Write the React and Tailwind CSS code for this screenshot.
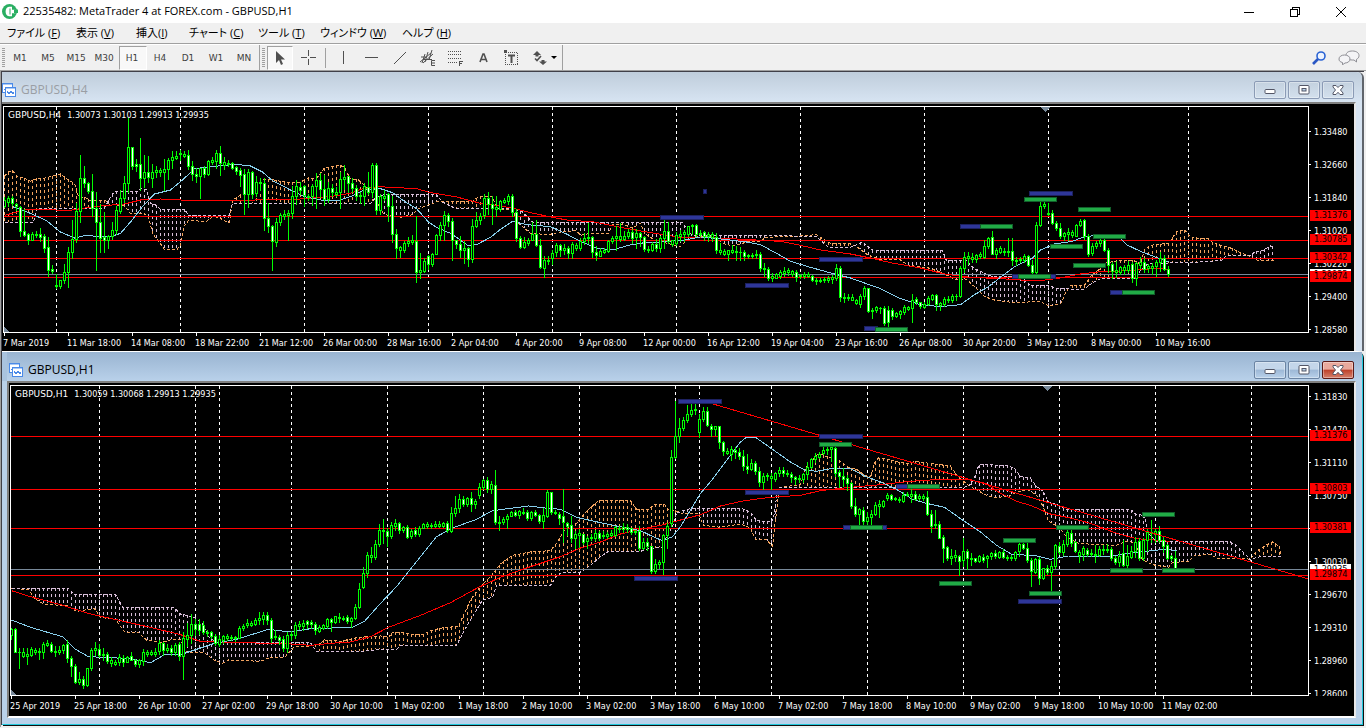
import React from "react";

/* Series are stored in thirds of a pixel on the vertical axis.
   A candle is "high bodyTop bodyBottom low", with a trailing f for a falling bar. */
const H4_CANDLES = `292 300 318 322,288 294 307 320,290 294 310 316f,310 312 320 330f,320 322 394 408f,328 394 405 410f,400 402 420 434f,396 402 420 422,395 402 405 412,385 402 412 424f,402 408 444 458f,412 442 512 530f,495 508 514 520f,522 556 560 566,540 542 558 564,494 517 542 550,442 457 518 562,360 417 457 474,310 333 418 426,165 234 334 366,
200 234 250 262f,248 250 274 280f,222 274 324 348f,276 324 368 512f,312 366 416 457f,336 412 422 458f,406 410 422 444,368 390 408 418,318 332 392 404,272 294 334 340,228 250 296 306,55 142 250 276,142 142 200 208f,178 193 200 214f,114 192 236 270f,165 216 236 262,168 216 232 246f,192 216 234 262,200 210 218 232,206 211 218 230,
178 208 216 272,176 182 208 238,154 172 182 206,155 170 174 178,152 160 164 180,153 162 168 172,152 166 200 208f,184 199 224 240f,204 222 228 248f,204 206 228 294,200 206 224 232f,180 184 224 226,172 182 186 192,152 160 184 204,138 160 190 226f,172 188 196 208,180 190 194 200,186 190 204 208f,198 203 214 222f,205 212 226 258f,
208 224 284 342f,208 216 284 322,214 216 282 294f,230 248 280 288,236 246 250 272,234 250 354 390f,310 354 380 398f,376 380 424 512f,356 368 426 440,340 346 368 376,330 343 348 358,332 340 346 420,260 290 340 354,240 260 290 312,248 262 272 282f,256 258 286 320f,282 288 292 302,252 260 288 316,220 242 260 324,220 240 268 292f,
226 268 298 316f,248 264 298 306,252 264 276 290f,262 276 282 290,218 238 276 326,196 232 238 268,228 230 250 276f,236 250 266 278f,256 264 290 302f,278 286 290 310,250 260 290 316,216 262 278 284f,190 196 278 292,190 196 332 344f,284 290 332 344,272 288 294 300,280 283 320 365f,290 318 404 428f,388 404 446 476f,440 443 450 472,
425 430 450 456,412 425 430 440,406 420 426 434,350 424 518 546f,460 510 516 536,476 484 514 516,466 469 492 508f,460 463 494 500,402 406 464 464,366 376 406 420,334 346 376 420,340 346 364 380f,356 364 422 482f,420 422 434 446f,408 432 450 472f,425 446 452 490,442 446 478 500f,358 378 478 488,336 362 380 382,340 348 362 372,
284 294 346 356,278 294 312 344f,290 312 324 372f,290 322 328 350,300 304 328 334,294 302 306 310,284 290 304 314,284 288 336 348f,328 336 416 424f,408 416 442 446f,412 428 442 444,416 420 430 436,366 402 420 422,362 402 436 438f,418 436 502 506f,470 480 504 532,470 480 484 492,452 460 476 492,430 436 458 470,432 436 452 468f,
434 445 452 462,440 446 460 474f,426 434 460 476,430 436 446 452,416 424 446 452,400 414 424 434,370 411 416 430,408 412 458 472f,440 458 466 480f,444 454 468 470,445 450 456 460,420 424 454 456,410 414 424 430,378 408 416 450,370 408 418 424,394 408 418 420,388 396 410 414,388 396 416 430f,388 400 412 446,396 400 412 440f,
410 412 448 454f,440 447 452 458,428 432 450 454,418 432 446 454f,410 416 446 456,358 394 416 444,366 394 424 430f,420 422 434 440,396 406 430 436,390 402 410 424,390 398 404 425,378 380 402 410,372 376 380 404,374 377 402 408f,392 400 402 410,393 398 410 422f,396 402 410 424,398 402 412 424,400 412 450 460f,430 452 456 464,
448 454 462 466,450 452 464 480,436 452 456 460,440 454 458 482,442 456 458 480,450 456 468 482f,462 466 470 476,460 466 469 475,452 462 466 476,457 462 506 514f,490 504 508 528,502 508 534 542f,520 530 534 544,520 524 534 536,510 518 530 534,502 513 520 528,504 512 518 526,510 514 524 530,512 518 532 544f,522 526 530 534,
518 524 530 534,518 522 528 532,526 530 542 544f,534 540 544 552,536 540 544 548,532 538 542 548,530 535 541 546,526 532 538 550,492 506 536 542,500 506 592 604f,580 592 596 606,584 592 596 602,584 592 600 602,598 600 610 614,582 590 612 622,560 566 590 598,564 566 634 636f,626 630 634 656,618 622 632 636,622 624 626 640,
618 624 670 676f,620 630 668 680f,624 630 650 658f,636 640 650 652,630 634 642 654,616 622 636 642,620 622 628 632,584 600 626 668,592 598 608 614f,606 608 620 626f,606 612 622 624,588 596 614 616,582 586 598 602,582 586 614 630f,606 610 616 632,592 598 612 618,588 598 602 608,582 590 602 608,584 588 590 602,500 506 588 592,
456 472 506 516,456 470 476 494,460 472 478 486,462 465 478 486,458 462 468 476,422 440 472 476,412 416 440 446,393 412 464 464f,446 450 464 474,440 446 456 460,446 454 458 466,416 453 457 468,416 454 480 496f,472 480 484 496,472 478 482 488,462 468 480 486,466 468 496 498f,482 496 518 522f,366 376 518 522,306 318 376 378,
300 312 320 324,310 340 344 346,332 340 370 374f,364 370 384 390f,370 384 410 414f,396 400 410 420,386 398 404 420,390 398 406 412,372 376 408 410,358 364 376 378,358 362 410 418f,402 408 462 470f,430 440 460 466,424 430 440 444,416 422 430 440,418 422 452 454f,444 452 496 516f,486 494 514 534f,484 510 516 532,498 502 516 524,
496 502 512 522,484 496 512 516,488 494 536 548f,488 490 536 556,472 488 496 506,476 488 508 516f,492 498 506 518,490 500 504 522,480 486 500 528,458 474 486 514,466 474 508 510f,500 508 524 528f`;

const H1_CANDLES = `745 748 766 778,746 748 816 818f,806 816 818 864,806 818 828 832,806 824 828 852,802 808 826 828,806 810 816 824,804 813 817 838,786 792 816 836,780 790 796 798,788 792 814 816f,800 814 817 828,800 810 818 824,792 796 810 820,782 794 836 848f,828 834 860 888f,852 858 908 910f,878 898 908 912,890 898 916 924f,865 866 916 918,
804 810 866 870,788 806 812 826,792 808 826 832f,806 822 826 842,818 824 844 850f,832 842 850 860,840 846 852 856,822 832 848 856,826 834 846 860f,830 832 846 848,818 828 840 842f,838 840 854 858f,838 842 854 862,808 818 844 856,810 818 822 828,810 818 822 826,806 818 824 830,782 790 814 824,786 790 810 826f,792 804 810 816,
796 804 818 826f,790 796 818 826,786 794 830 840f,758 776 830 898,730 766 778 798,704 732 766 790,718 732 748 766f,718 732 750 762f,724 736 756 764f,750 756 760 770,754 756 770 776f,762 770 790 796f,766 778 792 798,766 770 780 790,764 770 776 782,766 772 776 780,768 772 776 784,740 744 774 776,732 738 746 752,718 730 736 742,
724 730 736 740,716 720 732 736,698 716 720 734,698 706 718 732,696 706 722 732f,716 720 774 788f,752 768 772 778,766 772 780 794f,768 778 806 814f,756 766 806 816,754 762 766 782,726 736 766 776,724 734 740 748,722 730 738 750,720 724 734 746f,722 726 734 744f,726 734 752 762f,736 742 754 756,734 736 744 748,714 718 740 746,
714 718 728 754f,708 710 728 730,700 712 716 728,708 714 718 722,706 712 724 730f,712 716 724 742,674 682 716 718,610 628 682 684,562 580 622 626,518 526 580 592,502 526 532 548,482 494 532 538,432 452 492 500,418 450 455 490,446 454 470 500f,426 436 470 474,418 430 438 450,428 431 452 460f,438 442 452 456,436 442 472 474f,
448 454 470 476,442 452 464 470f,440 444 464 470,430 434 444 446,428 434 440 446,430 436 440 444,424 434 440 442,424 432 438 442,426 430 438 442,424 430 452 458f,382 400 454 456,348 384 400 408,342 358 384 396,350 358 374 378f,352 356 374 380,336 356 374 394f,358 364 374 384,310 322 346 356,298 302 322 328,292 302 328 336f,
304 314 328 340,270 316 428 434f,410 426 430 452,412 418 428 432,404 408 418 444,394 398 408 410,392 398 406 410f,392 395 406 414,384 396 400 404,392 398 416 420f,394 398 416 422,390 398 406 410f,402 406 424 430f,386 406 424 446,332 336 408 412,336 338 396 404f,390 396 400 404,396 404 416 432f,328 410 428 488f,426 430 438 466f,
408 436 474 486f,454 462 474 504,448 460 466 502,462 464 486 492f,468 476 484 506,462 472 476 482,452 459 474 480,454 460 476 480f,454 466 470 476,458 462 468 476,452 460 466 470,438 442 466 468,440 444 448 458,430 442 448 456f,434 442 448 458f,444 446 458 462f,450 454 458 462,440 454 506 510f,476 488 506 508,476 486 500 510f,
500 500 574 580f,538 554 574 580,542 546 554 566,462 466 546 582,430 440 466 504,212 232 430 440,64 170 232 234,116 144 170 186,112 120 146 150,75 102 122 128,68 90 104 108,70 88 92 102,104 118 158 172,82 94 118 124,82 94 136 140f,134 138 148 170f,140 140 148 166,138 140 188 206f,184 188 214 226f,206 214 220 224,
200 208 222 240,202 210 218 234f,206 218 230 238f,210 228 258 270f,222 258 268 280f,238 250 268 272,244 250 274 284f,262 274 308 320f,280 290 308 328,280 286 290 300,280 288 296 328,276 280 298 304,262 272 280 290,262 272 280 290f,270 280 284 290,278 282 292 308f,290 292 298 312f,286 295 299 306,280 284 298 306,246 262 284 298,
236 238 262 266,220 228 238 246,218 222 232 234,200 210 220 224,200 208 212 222,196 202 208 244,196 204 280 290f,270 278 290 322f,264 290 298 320f,286 296 310 332f,308 310 380 386f,354 378 404 408f,384 388 404 440,382 390 424 436f,396 412 424 434,392 404 412 434,366 376 404 406,360 374 378 412,360 364 378 382,340 346 356 360,
344 346 358 360f,352 354 358 362,352 358 362 368,338 346 364 368,336 342 346 350,328 342 350 366,334 342 358 362f,344 348 356 362,344 350 354 360,334 352 404 406f,390 402 438 458f,390 432 436 444,424 432 474 476f,466 472 504 548f,500 502 536 540f,508 528 536 552,510 526 532 544,526 528 544 586f,474 514 542 560,508 514 536 568f,
520 534 538 556,534 536 544 548f,526 530 544 548,524 532 542 548f,526 530 536 562,516 520 530 538,510 520 530 536f,514 516 532 536,508 516 532 536f,526 532 536 542,526 532 536 540,514 518 534 540,482 492 514 530,484 492 504 508f,490 504 540 546f,536 540 574 620f,534 538 576 580,532 538 596 614f,564 566 596 598,556 564 578 582f,
544 560 576 638,492 496 560 566,488 498 518 524f,482 494 518 526,450 458 492 500,450 460 490 500f,484 488 514 518f,512 516 526 548,500 506 524 540,506 512 524 528f,508 520 524 530,496 522 526 546,500 508 526 530,496 508 512 522,494 508 512 516,502 508 536 540f,530 536 546 552f,514 528 548 558,482 520 556 560f,496 530 556 566,
498 514 532 536,472 488 514 532,476 484 534 540f,476 482 536 540,448 456 482 514,420 456 460 486,448 454 462 488,440 454 480 486f,470 480 498 516f,494 496 534 538f,526 530 536 542f,514 536 566 570f`;

const H4 = {
  x0: 4,
  dy: -7,
  candles: H4_CANDLES,
  spanA: "4,228 8,216 12,212 17,230 22,232 30,244 36,236 45,234 60,222 66,236 74,250 78,290 84,292 90,302 105,302 108,312 124,318 130,340 144,342 148,350 152,400 160,432 164,448 176,450 180,436 184,378 188,362 206,364 212,350 218,352 226,366 229,366 232,300 240,285 252,270 262,240 270,238 284,246 300,246 308,234 316,236 324,204 332,200 338,196 344,200 346,216 350,236 358,240 366,262 374,262 378,320 384,344 400,352 412,344 418,326 436,306 472,304 478,290 492,290 496,326 512,330 518,370 530,400 548,404 560,396 576,392 580,406 590,400 608,400 612,374 622,372 632,384 640,370 644,400 654,420 672,434 680,440 686,420 694,410 714,410 722,430 732,438 740,432 748,424 758,426 766,412 798,408 816,404 824,420 830,430 850,432 856,440 868,466 880,478 900,480 908,496 928,504 938,514 948,528 956,540 966,538 974,560 984,590 996,602 1008,606 1016,608 1040,604 1048,618 1060,612 1065,580 1070,556 1084,556 1090,530 1098,510 1104,490 1120,480 1132,480 1140,492 1144,450 1150,436 1168,430 1176,396 1184,390 1190,410 1200,416 1208,416 1212,428 1220,436 1230,444 1240,458 1250,470 1258,482 1274,482",
  spanB: "4,366 33,366 37,325 104,325 110,290 114,275 136,275 140,266 146,270 150,310 156,316 160,328 184,328 188,346 229,346 232,310 370,310 376,290 384,284 436,284 442,306 454,324 512,324 522,336 532,366 682,366 686,384 692,408 766,406 816,410 828,442 850,442 862,426 868,440 872,450 942,452 946,482 966,482 970,496 974,506 980,514 990,528 1016,530 1024,540 1030,556 1050,558 1056,566 1084,568 1092,548 1100,536 1136,534 1140,510 1148,490 1190,488 1210,484 1222,480 1226,466 1250,468 1254,456 1262,452 1270,438 1274,440",
  slow: "4,346 14,338 26,328 70,331 80,326 100,318 124,312 140,300 160,297 200,303 240,301 300,297 330,290 350,280 362,266 378,260 416,266 430,278 455,290 480,310 512,324 530,338 552,352 570,362 590,364 620,382 650,398 680,412 700,412 730,416 780,424 800,436 820,450 850,462 870,474 890,488 920,504 944,522 970,532 1000,536 1020,540 1040,542 1060,534 1080,522 1100,515 1130,512 1155,505 1168,508",
  fast: "12,320 30,340 46,362 60,396 74,414 84,407 110,410 120,400 130,366 142,320 154,282 170,270 182,240 194,206 210,200 236,193 250,198 262,216 272,242 290,270 304,290 320,300 336,303 350,290 364,270 380,266 392,278 404,304 416,326 428,366 436,382 450,400 456,412 468,438 476,434 490,412 500,388 512,364 526,374 550,380 566,402 580,424 596,444 612,450 628,436 644,428 660,426 684,420 700,411 724,418 746,426 760,434 776,460 790,484 810,502 834,522 850,534 880,566 900,596 920,614 940,620 960,614 974,584 988,560 1000,532 1014,500 1032,474 1040,450 1054,432 1072,424 1082,412 1100,404 1118,410 1126,434 1140,454 1154,470 1168,486",
  levels: [349, 421, 475, 532],
  bid: 523,
  days: [56, 180, 304, 428, 552, 676, 800, 924, 1048, 1188],
  shift: 1045,
  blue: [[660, 352, 44], [745, 556, 44], [819, 479, 44], [864, 685, 14], [960, 379, 22], [1029, 280, 44], [1012, 529, 44], [1110, 577, 16], [703, 274, 4]],
  green: [[875, 688, 33], [980, 379, 33], [1024, 298, 33], [1078, 328, 33], [1050, 439, 33], [1093, 409, 33], [1073, 496, 33], [1018, 529, 33], [1122, 577, 33]],
};

const H1 = {
  x0: 11,
  dy: -6,
  candles: H1_CANDLES,
  spanA: "11,626 28,628 34,655 44,674 66,676 76,694 94,686 100,712 115,718 124,756 138,758 146,780 160,788 172,778 180,778 186,816 204,818 212,838 222,850 228,840 260,844 268,834 284,832 294,800 310,798 320,790 324,780 340,784 358,772 380,768 388,772 392,758 404,758 412,764 424,762 430,752 444,742 458,740 462,712 470,660 480,620 490,590 500,552 512,526 530,516 550,512 556,490 564,450 576,430 586,394 598,362 630,362 636,388 648,388 654,374 664,374 668,390 678,394 682,402 698,400 703,436 720,442 740,432 750,444 755,478 766,480 772,498 775,420 779,322 800,314 806,260 812,240 818,220 828,232 838,240 848,262 856,268 864,286 870,290 874,250 878,234 890,240 900,248 910,250 914,244 934,252 950,258 956,284 966,312 974,326 986,346 994,352 1008,350 1016,336 1028,330 1036,346 1042,376 1048,424 1058,440 1066,470 1078,490 1096,494 1116,496 1126,484 1134,488 1142,540 1152,554 1168,562 1172,548 1188,544 1194,526 1210,524 1218,536 1240,534 1250,538 1256,514 1264,498 1272,486 1279,500 1280,528",
  spanB: "11,626 68,626 74,642 115,642 122,682 174,684 180,702 194,712 202,730 208,770 216,788 310,788 316,814 360,814 380,808 396,808 400,796 456,796 464,750 474,700 482,660 492,652 496,616 550,616 556,588 562,576 580,576 590,556 600,530 608,514 640,514 648,506 662,502 666,470 672,440 676,400 686,388 692,386 742,386 750,396 756,422 771,426 774,400 776,350 779,322 962,322 968,320 974,294 978,258 980,253 1008,257 1014,266 1020,290 1030,294 1036,320 1042,332 1048,366 1060,378 1064,388 1130,388 1136,404 1144,406 1148,460 1156,486 1166,484 1230,486 1236,496 1242,514 1250,540 1256,532 1266,528 1280,528",
  slow: "11,632 30,650 60,674 90,702 120,722 150,742 180,764 200,784 230,788 280,790 310,796 330,790 350,786 370,770 388,742 420,706 450,668 478,622 500,592 520,570 540,550 560,530 580,504 600,486 620,462 640,448 660,436 680,420 700,404 720,378 744,362 770,352 800,346 820,332 850,322 880,314 910,304 940,298 970,300 985,310 1000,340 1016,364 1030,376 1050,402 1070,414 1090,430 1116,460 1136,476 1170,484",
  fast: "11,720 30,742 46,756 62,770 74,806 88,830 130,836 150,848 164,824 180,824 196,808 214,790 236,778 268,748 290,756 310,746 352,742 364,724 380,670 396,620 420,530 436,470 452,444 476,418 492,392 528,378 544,384 560,388 576,412 600,428 616,438 640,452 654,472 662,482 672,470 680,440 690,390 700,340 712,298 730,226 740,186 746,172 756,174 772,208 790,246 804,270 816,274 832,265 850,266 864,288 880,306 896,328 912,358 926,370 944,382 962,420 980,456 996,496 1012,524 1034,526 1050,538 1068,528 1110,528 1140,516 1164,508 1176,512",
  trend: "708,68 1307,596",
  levels: [169, 328, 445, 586],
  bid: 568,
  days: [99, 195, 219, 291, 387, 483, 579, 675, 699, 771, 867, 963, 1059, 1155, 1251],
  shift: 1047,
  blue: [[678, 64, 44], [745, 337, 44], [634, 595, 44], [819, 169, 44], [843, 442, 44], [896, 319, 16], [1018, 664, 44]],
  green: [[819, 193, 33], [850, 442, 33], [907, 319, 33], [939, 610, 33], [1003, 481, 33], [1029, 640, 33], [1056, 442, 33], [1110, 572, 33], [1142, 403, 33], [1162, 571, 33]],
};

const parse = (s) => s.split(" ").map((p) => p.split(",").map(Number));

function valueAt(points, x) {
  for (let i = 1; i < points.length; i++) {
    const [xa, ya] = points[i - 1];
    const [xb, yb] = points[i];
    if (x <= xb) return xb === xa ? yb : ya + ((yb - ya) * (x - xa)) / (xb - xa);
  }
  return points[points.length - 1][1];
}

function Plot({ c, label }) {
  const X = (x) => x - c.x0;
  const Y = (v) => Math.floor(v / 3) + c.dy;
  const line = (s) => parse(s).map(([x, v]) => `${X(x) + 0.5},${v / 3 + c.dy}`).join(" ");
  const a = parse(c.spanA);
  const b = parse(c.spanB);
  const end = a[a.length - 1][0];
  const hatch = [];
  for (let x = c.x0; x <= end; x += 4) {
    const ya = Y(valueAt(a, x));
    const yb = Y(valueAt(b, x));
    if (Math.abs(ya - yb) > 2) {
      hatch.push(
        <path key={x} d={`M${X(x) + 0.5} ${Math.min(ya, yb)}V${Math.max(ya, yb)}`} stroke={ya < yb ? "#f4a460" : "#d8bfd8"} strokeDasharray="3 3" />
      );
    }
  }
  return (
    <svg className="block h-full w-full" role="img" aria-label={label} shapeRendering="crispEdges" fill="none">
      {c.days.map((x) => (
        <line key={x} x1={X(x) + 0.5} x2={X(x) + 0.5} y1="0" y2="100%" stroke="#fff" strokeDasharray="3 3" />
      ))}
      {hatch}
      <polyline points={line(c.spanA)} stroke="#f4a460" strokeDasharray="3 2" />
      <polyline points={line(c.spanB)} stroke="#d8bfd8" strokeDasharray="3 2" />
      {c.levels.map((v) => (
        <rect key={v} x="0" y={Y(v)} width="100%" height="1" fill="#f00" />
      ))}
      <rect x="0" y={Y(c.bid)} width="100%" height="1" fill="#778899" />
      <polyline points={line(c.slow)} stroke="#f00" />
      <polyline points={line(c.fast)} stroke="#87ceeb" />
      {c.candles.split(",").map((s, i) => {
        const [h, t, bt, l] = s.trim().split(" ").map((n) => parseInt(n, 10));
        const x = i * 4;
        const top = Y(t);
        const height = Math.max(Y(bt) - top + 1, 1);
        return (
          <g key={i}>
            <rect x={x} y={Y(h)} width="1" height={Y(l) - Y(h) + 1} fill="#0f0" />
            <rect x={x - 1} y={top} width="3" height={height} fill="#0f0" />
            {height > 2 && <rect x={x} y={top + 1} width="1" height={height - 2} fill={s.includes("f") ? "#fff" : "#000"} />}
          </g>
        );
      })}
      {c.trend && <polyline points={line(c.trend)} stroke="#f00" />}
      {c.blue.map(([x, v, w]) => (
        <g key={`${x}-${v}`}>
          <rect x={X(x)} y={Y(v) - 2} width={w} height="5" fill="#1d2160" />
          <rect x={X(x) + 1} y={Y(v) - 1} width={w - 2} height="3" fill="#2e3699" />
        </g>
      ))}
      {c.green.map(([x, v, w]) => (
        <g key={`${x}-${v}`}>
          <rect x={X(x)} y={Y(v) - 2} width={w} height="5" fill="#12602b" />
          <rect x={X(x) + 1} y={Y(v) - 1} width={w - 2} height="3" fill="#21ab46" />
        </g>
      ))}
      <path d={`M${X(c.shift) - 4} 0h9l-4 5h-1z`} fill="#778899" />
      <svg y="100%" overflow="visible">
        <path d="M0 -5L5 0H0z" fill="#778899" />
      </svg>
    </svg>
  );
}

function ChartBody({ c, name, quote, heightClass, axisClass, scaleClass, prices, tags, bid, times }) {
  return (
    <div className="bg-black pt-0.5 pl-px font-['DejaVu_Sans_Condensed','DejaVu_Sans',sans-serif] text-[9px] text-white">
      <div className={`flex ${heightClass}`}>
        <div className="relative min-w-0 flex-1 overflow-hidden border border-white">
          <Plot c={c} label={`${name} chart`} />
          <p className="absolute top-0 left-1 flex gap-1.5 leading-4">
            <span className="font-['DejaVu_Sans',sans-serif]">{name}</span>
            <span>{quote}</span>
          </p>
        </div>
        <div className="relative w-[45px] shrink-0">
          <div className={scaleClass}>
            {prices.map((p) => (
              <div key={p} className="flex h-[33px] items-center gap-[3px]">
                <span className="h-px w-0.5 bg-white" />
                <span>{p}</span>
              </div>
            ))}
          </div>
          <div className={`absolute left-px w-[41px] bg-white pl-1 leading-[11px] text-black ${bid[1]}`}>{bid[0]}</div>
          {tags.map(([p, pos]) => (
            <div key={p} className={`absolute left-px w-[41px] bg-[#f00] pl-1 leading-[11px] text-black ${pos}`}>{p}</div>
          ))}
        </div>
      </div>
      <div className={`relative flex overflow-hidden bg-black ${axisClass}`}>
        {times.map((t) => (
          <div key={t} className="w-16 shrink-0 whitespace-nowrap">
            <div className="ml-px h-[3px] w-px bg-white" />
            <div className="leading-[14px]">{t}</div>
          </div>
        ))}
      </div>
    </div>
  );
}

function ChartIcon() {
  return (
    <svg width="14" height="14" viewBox="0 0 14 14" fill="none" shapeRendering="crispEdges" aria-hidden="true">
      <rect x=".5" y=".5" width="10" height="9" fill="#fff" stroke="#4a8ae8" />
      <path d="M1 1.500h9" stroke="#a9c9f6" />
      <path d="M2 6.500h1v-2h1v2h1v-1h2v1h2" stroke="#4a8ae8" />
      <rect x="3.500" y="4.500" width="10" height="9" fill="#fff" stroke="#4a8ae8" />
      <path d="M4 5.500h9" stroke="#a9c9f6" />
      <path d="M5 8l2 3 2-3 2 3 1-2" stroke="#4a8ae8" />
    </svg>
  );
}

function CaptionButton({ kind, active }) {
  const skin =
    active && kind === "Close"
      ? "border-[#5b1a16] bg-linear-to-b from-[#e9a99c] from-45% via-[#bd3f28] via-50% to-[#d4806c]"
      : active
        ? "border-[#6b84a3] bg-linear-to-b from-[#c4d6ea] from-45% via-[#9db8d6] via-50% to-[#b9d1ea]"
        : "border-[#8b9bb5] bg-linear-to-b from-[#c3d1df] to-[#d3e0ed]";
  return (
    <button type="button" aria-label={kind} className={`flex h-[18px] w-8 items-center justify-center rounded-[2px] border shadow-[inset_0_0_0_1px_rgba(255,255,255,0.35)] ${skin}`}>
      <svg width="12" height="10" viewBox="0 0 12 10" fill="#fff" stroke="#535666" aria-hidden="true">
        {kind === "Minimize" && <rect x="1" y="4.500" width="10" height="4" rx="1" />}
        {kind === "Restore" && (
          <>
            <rect x="1" y=".5" width="10" height="8.500" rx="1" />
            <rect x="4" y="3.500" width="4" height="2.500" fill="#b9d1ea" />
          </>
        )}
        {kind === "Close" && <path d="M1 .5h3l2 2 2-2h3v1.500L8.500 5 11 8v1.500H8L6 7.300 4 9.500H1V8l2.500-3L1 2z" />}
      </svg>
    </button>
  );
}

function CaptionButtons({ active }) {
  return (
    <div className="flex gap-0.5">
      {["Minimize", "Restore", "Close"].map((k) => (
        <CaptionButton key={k} kind={k} active={active} />
      ))}
    </div>
  );
}

const MENUS = [
  ["ファイル (", "F"],
  ["表示 (", "V"],
  ["挿入(", "I"],
  ["チャート (", "C"],
  ["ツール (", "T"],
  ["ウィンドウ (", "W"],
  ["ヘルプ (", "H"],
];
const FRAMES = ["M1", "M5", "M15", "M30", "H1", "H4", "D1", "W1", "MN"];

const TOOLS = [
  ["Vertical line", <path key="p" d="M8.500 2v13" />],
  ["Horizontal line", <path key="p" d="M2 8.500h13" />],
  ["Trendline", <path key="p" d="M3 15L15 3" />],
  [
    "Equidistant channel",
    <g key="p">
      <path d="M1 13L12 4M4 14L14 5M2 8h5M4 10.500h9M3 14l3-9M6 13l3-10M10 11l3-10" />
      <path d="M16 11.500h-3.500v5H16M13 14h3" />
    </g>,
  ],
  [
    "Fibonacci retracement",
    <g key="p" shapeRendering="crispEdges">
      <path d="M1 2.500h14M1 5.500h14M1 9.500h14M1 13.500h9" strokeDasharray="1 1" />
      <path d="M12.500 17v-5H16M12.500 14.500H15" />
    </g>,
  ],
  ["Text", <path key="p" d="M5 13L8 5h1l3 8M6.500 10.500h4" strokeWidth="1.600" />],
  [
    "Text label",
    <g key="p">
      <rect x="2.500" y="3.500" width="12" height="12" strokeDasharray="1 1" shapeRendering="crispEdges" />
      <path d="M1 1h3v3H1z" fill="#505050" stroke="none" />
      <path d="M5 6.500h7M8.500 6v8" strokeWidth="2" />
    </g>,
  ],
];

function ToolIcon({ children, wide }) {
  return (
    <svg width={wide ? 26 : 18} height="18" viewBox={wide ? "0 0 26 18" : "0 0 18 18"} fill="none" stroke="#505050" aria-hidden="true">
      {children}
    </svg>
  );
}

function Grip() {
  return <span className="mx-0.5 h-5 w-[3px] bg-[repeating-linear-gradient(#a0a0a0_0_1px,#f0f0f0_1px_2px)]" />;
}

export default function App() {
  return (
    <div className="min-h-screen bg-[#f0f0f0] font-['Open_Sans','Noto_Sans_CJK_JP',sans-serif] text-xs text-black">
      <header className="flex h-[23px] items-center bg-white pl-0.5">
        <svg width="17" height="17" viewBox="0 0 17 17" aria-hidden="true">
          <circle cx="7.500" cy="8.500" r="7.500" fill="#2aae62" />
          <path d="M7 3.800h3v3h3.500v3.400H10v3H7c-4.500 0-4.500-9.400 0-9.400z" fill="#fff" />
          <path d="M7.500 5.500h1v6h-1z" fill="#2aae62" />
          <path d="M12 6.500h4v3.500h-4z" fill="#2aae62" />
        </svg>
        <h1 className="ml-1 flex-1 text-[11px]">22535482: MetaTrader 4 at FOREX.com - GBPUSD,H1</h1>
        <div className="flex pr-0.5">
          {[
            ["Minimize", <path key="p" d="M0 5.500h10" />],
            ["Restore", <path key="p" d="M.5 2.500h7v7h-7zM2.500 2.500v-2h7v7h-2" />],
            ["Close", <path key="p" d="M0 0l10 10M10 0L0 10" shapeRendering="auto" />],
          ].map(([name, art]) => (
            <button key={name} type="button" aria-label={name} className="flex h-[21px] w-[46px] items-center justify-center">
              <svg width="10" height="10" viewBox="0 0 10 10" fill="none" stroke="#000" shapeRendering="crispEdges" aria-hidden="true">
                {art}
              </svg>
            </button>
          ))}
        </div>
      </header>

      <nav className="grid h-5 grid-cols-[69px_60px_53px_69px_62px_82px_auto] items-center justify-start pl-[7px] text-[11px] [font-feature-settings:'palt']">
        {MENUS.map(([text, key]) => (
          <button key={text} type="button" className="text-left whitespace-nowrap">
            {text}
            <u>{key}</u>)
          </button>
        ))}
      </nav>

      <div className="flex h-[27px] items-center border-t border-[#a0a0a0] pt-px text-[9px] shadow-[inset_0_1px_0_#fff] font-['DejaVu_Sans',sans-serif] text-[#404040]">
        <Grip />
        {FRAMES.map((f) => (
          <button
            key={f}
            type="button"
            aria-pressed={f === "H1"}
            className={`h-6 w-7 pr-0.5 text-center ${f === "H1" ? "border border-[#a0a0a0] border-r-white border-b-white bg-[#f8f8f8]" : ""}`}
          >
            {f}
          </button>
        ))}
        <span className="h-full w-px bg-[#a0a0a0]" />
        <Grip />
        <button type="button" aria-label="Cursor" aria-pressed="true" className="flex h-6 w-[26px] items-center justify-center border border-[#a0a0a0] border-r-white border-b-white bg-[#f8f8f8]">
          <ToolIcon>
            <path d="M5 2v12l3-3 2 5 2-1-2-4.500h4z" fill="#505050" stroke="none" />
          </ToolIcon>
        </button>
        <button type="button" aria-label="Crosshair" className="flex h-6 w-8 items-center justify-center">
          <ToolIcon>
            <path d="M8.500 1v6M8.500 10v6M1 8.500h6M10 8.500h6" />
          </ToolIcon>
        </button>
        <span className="h-5 w-px bg-[#a0a0a0]" />
        <span className="w-1" />
        {TOOLS.map(([name, art]) => (
          <button key={name} type="button" aria-label={name} className="flex h-6 w-7 items-center justify-center">
            <ToolIcon>{art}</ToolIcon>
          </button>
        ))}
        <button type="button" aria-label="Arrows" className="ml-0.5 flex h-6 w-[34px] items-center justify-center">
          <ToolIcon wide>
            <path d="M5 2l4 4H6.500v1.500h-3V6H1zM11 16l-4-3.500h2.500V11h3v1.500H15z" fill="#505050" stroke="none" />
            <path d="M3 9.500l2 2 4-4.500" strokeWidth="1.600" />
            <path d="M19 7h6l-3 3z" fill="#000" stroke="none" />
          </ToolIcon>
        </button>
        <span className="h-full w-px bg-[#a0a0a0]" />
        <span className="flex-1" />
        <button type="button" aria-label="Search" className="mr-3">
          <svg width="14" height="14" viewBox="0 0 14 14" fill="none" aria-hidden="true">
            <circle cx="9" cy="5" r="4" fill="#eef4ff" stroke="#2a63d4" strokeWidth="1.600" />
            <path d="M6 8l-5 5" stroke="#2a57c4" strokeWidth="2.600" />
          </svg>
        </button>
        <button type="button" aria-label="Chat" className="mr-1.5">
          <svg width="22" height="15" viewBox="0 0 22 15" fill="#f4f4f6" stroke="#8e8e94" aria-hidden="true">
            <path d="M14.500 1c4 0 6.500 2 6.500 4.500 0 2-1 3-2.500 3.800V12l-2.500-2c-5 .3-8-1.500-8-4.500S10.500 1 14.500 1z" />
            <path d="M6.500 5c3 0 5.500 1.500 5.500 4s-2.500 4-5 4l-2.500 1.800V12.500C2 12 1 10.800 1 9c0-2.500 2.500-4 5.500-4z" />
          </svg>
        </button>
      </div>

      <main className="border-t border-l border-[#a0a0a0] pr-0.5 pb-0.5">
        <div className="border-t border-l border-[#404048]">
          <section aria-label="GBPUSD,H4" className="rounded-tr-md border-r-2 border-[#60656c] bg-[#d7e4f2]">
            <div className="flex h-[30px] items-center gap-[5px] rounded-tr-md bg-linear-to-b from-[#bfcddb] to-[#d7e4f2] pt-1.5 pr-2">
              <ChartIcon />
              <h2 className="flex-1 text-[#9a9ea4]">GBPUSD,H4</h2>
              <CaptionButtons />
            </div>
            <div className="mr-1.5 border-t-2 border-r-2 border-t-[#808080] border-r-[#e8e8e8]">
              <ChartBody
                c={H4}
                name="GBPUSD,H4"
                quote="1.30073 1.30103 1.29913 1.29935"
                heightClass="h-[227px]"
                axisClass="h-[18px]"
                scaleClass="pt-[9px]"
                prices={["1.33480", "1.32660", "1.31840", "1.31020", "1.30220", "1.29400", "1.28580"]}
                bid={["1.29935", "top-[163px]"]}
                tags={[["1.31376", "top-[104px]"], ["1.30785", "top-[128px]"], ["1.30342", "top-[146px]"], ["1.29874", "top-[165px]"]]}
                times={["7 Mar 2019", "11 Mar 18:00", "14 Mar 08:00", "18 Mar 22:00", "21 Mar 12:00", "26 Mar 00:00", "28 Mar 16:00", "2 Apr 04:00", "4 Apr 20:00", "9 Apr 08:00", "12 Apr 00:00", "16 Apr 12:00", "19 Apr 04:00", "23 Apr 16:00", "26 Apr 08:00", "30 Apr 20:00", "3 May 12:00", "8 May 00:00", "10 May 16:00"]}
              />
            </div>
          </section>
          <section aria-label="GBPUSD,H1" className="mr-px rounded-tr-md border-t border-r border-b border-t-white border-r-[#22c8dc] border-b-[#22c8dc] bg-[#b9d1ea] pb-1.5 pl-[5px] shadow-[1px_1px_0_#101010]">
            <div className="flex h-[29px] items-center gap-[5px] bg-linear-to-b from-[#99b4d1] to-[#b9d1ea] pt-1.5 pr-2 pl-0.5 shadow-[-5px_0_0_#a9c3de]">
              <ChartIcon />
              <h2 className="flex-1">GBPUSD,H1</h2>
              <CaptionButtons active />
            </div>
            <div className="mr-1.5 border-2 border-t-[#808080] border-r-[#e8e8e8] border-b-white border-l-[#808080]">
              <ChartBody
                c={H1}
                name="GBPUSD,H1"
                quote="1.30059 1.30068 1.29913 1.29935"
                heightClass="h-[311px]"
                axisClass="h-5"
                scaleClass="-mt-[5px]"
                prices={["1.31830", "1.31470", "1.31110", "1.30750", "1.30390", "1.30030", "1.29670", "1.29310", "1.28960", "1.28600"]}
                bid={["1.29935", "top-[179px]"]}
                tags={[["1.31376", "top-[45px]"], ["1.30803", "top-[98px]"], ["1.30381", "top-[137px]"], ["1.29874", "top-[184px]"]]}
                times={["25 Apr 2019", "25 Apr 18:00", "26 Apr 10:00", "27 Apr 02:00", "29 Apr 18:00", "30 Apr 10:00", "1 May 02:00", "1 May 18:00", "2 May 10:00", "3 May 02:00", "3 May 18:00", "6 May 10:00", "7 May 02:00", "7 May 18:00", "8 May 10:00", "9 May 02:00", "9 May 18:00", "10 May 10:00", "11 May 02:00"]}
              />
            </div>
          </section>
        </div>
      </main>
    </div>
  );
}
